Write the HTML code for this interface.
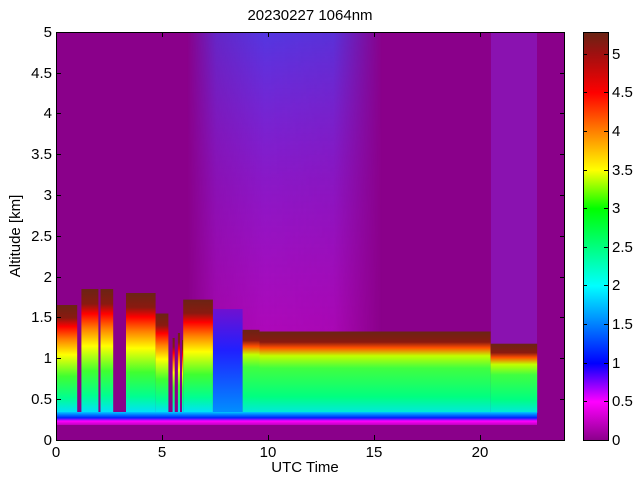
<!DOCTYPE html>
<html><head><meta charset="utf-8"><style>
body{margin:0;background:#fff;width:640px;height:480px;overflow:hidden}
svg{position:absolute;left:0;top:0;font-family:"Liberation Sans",sans-serif}
</style></head><body>
<svg width="640" height="480" viewBox="0 0 640 480" xmlns="http://www.w3.org/2000/svg">
<defs>
<linearGradient id="cl" x1="0" y1="0" x2="0" y2="1">
<stop offset="0" stop-color="#6b2414"/><stop offset="0.12" stop-color="#8a1a10"/><stop offset="0.2" stop-color="#ff0000"/><stop offset="0.32" stop-color="#ff8000"/><stop offset="0.46" stop-color="#ffff00"/><stop offset="0.66" stop-color="#40ff30"/><stop offset="0.86" stop-color="#00ff90"/><stop offset="1" stop-color="#00e0ff"/></linearGradient>
<linearGradient id="lc" x1="0" y1="0" x2="0" y2="1">
<stop offset="0" stop-color="#6b2414"/><stop offset="0.13" stop-color="#8a1a10"/><stop offset="0.2" stop-color="#ff5000"/><stop offset="0.3" stop-color="#c0ff00"/><stop offset="0.45" stop-color="#40ff40"/><stop offset="0.8" stop-color="#00ff80"/><stop offset="1" stop-color="#00e8e0"/></linearGradient>
<linearGradient id="bl" x1="0" y1="0" x2="0" y2="1">
<stop offset="0" stop-color="#7010d0"/><stop offset="0.4" stop-color="#2020ff"/><stop offset="1" stop-color="#0090ff"/></linearGradient>
<linearGradient id="sf" x1="0" y1="0" x2="0" y2="1">
<stop offset="0" stop-color="#00c8ff"/><stop offset="0.45" stop-color="#0020ff"/><stop offset="0.7" stop-color="#ff00ff"/><stop offset="1" stop-color="#c000c0"/></linearGradient>
<linearGradient id="nz" x1="0" y1="0" x2="0" y2="1">
<stop offset="0" stop-color="#4a40f0" stop-opacity="0.85"/><stop offset="0.5" stop-color="#8a28f0" stop-opacity="0.6"/><stop offset="1" stop-color="#d010e8" stop-opacity="0.5"/></linearGradient>
<linearGradient id="nm" x1="0" y1="0" x2="1" y2="0">
<stop offset="0" stop-color="#fff" stop-opacity="0"/><stop offset="0.15" stop-color="#fff" stop-opacity="0.7"/><stop offset="0.4" stop-color="#fff" stop-opacity="1"/><stop offset="0.75" stop-color="#fff" stop-opacity="0.9"/><stop offset="1" stop-color="#fff" stop-opacity="0"/></linearGradient>
<mask id="m"><rect x="187" y="32" width="195" height="410" fill="url(#nm)"/></mask>
<linearGradient id="cb" x1="0" y1="0" x2="0" y2="1">
<stop offset="0" stop-color="#692414"/><stop offset="0.053" stop-color="#a01010"/><stop offset="0.148" stop-color="#ff0000"/><stop offset="0.242" stop-color="#ff8000"/><stop offset="0.337" stop-color="#ffff00"/><stop offset="0.432" stop-color="#00ff00"/><stop offset="0.527" stop-color="#00ff80"/><stop offset="0.621" stop-color="#00ffff"/><stop offset="0.716" stop-color="#0080ff"/><stop offset="0.811" stop-color="#0000ff"/><stop offset="0.905" stop-color="#ff00ff"/><stop offset="1" stop-color="#8a008a"/></linearGradient>
</defs>
<rect x="56" y="32" width="509" height="408" fill="#8a008a"/>
<rect x="187" y="32" width="195" height="300" fill="url(#nz)" mask="url(#m)"/>
<rect x="491" y="32" width="46" height="312" fill="#8a20d0" opacity="0.55"/>
<rect x="212.9" y="309" width="29.7" height="104" fill="url(#bl)"/>
<g fill="url(#cl)">
<rect x="56" y="305" width="21.2" height="108"/>
<rect x="81.4" y="289" width="17" height="124"/>
<rect x="100.5" y="289" width="12.7" height="124"/>
<rect x="126" y="293" width="29.6" height="120"/>
<rect x="155.6" y="313.5" width="12.8" height="99.5"/>
<rect x="172.6" y="338" width="2.1" height="75"/>
<rect x="177.9" y="333" width="2.1" height="80"/>
<rect x="182" y="340" width="1.2" height="73"/>
<rect x="183.2" y="299.6" width="29.7" height="113.4"/>
</g>
<g fill="url(#lc)">
<rect x="242.6" y="329.8" width="16.9" height="83.2"/>
<rect x="259.5" y="331.5" width="231.1" height="81.5"/>
<rect x="490.6" y="343.7" width="46.6" height="69.3"/>
</g>
<rect x="56" y="412" width="481" height="13" fill="url(#sf)"/>
<rect x="583.5" y="32.5" width="25" height="408" fill="url(#cb)" stroke="#000"/>
<rect x="56.5" y="32.5" width="508" height="408" fill="none" stroke="#000"/>
<g stroke="#000">
<path d="M56 440.5h5M56 399.5h5M56 358.5h5M56 317.5h5M56 277.5h5M56 236.5h5M56 195.5h5M56 154.5h5M56 113.5h5M56 73.5h5M56 32.5h5"/>
<path d="M565 399.5h-5M565 358.5h-5M565 317.5h-5M565 277.5h-5M565 236.5h-5M565 195.5h-5M565 154.5h-5M565 113.5h-5M565 73.5h-5"/>
<path d="M162.5 440v-5M268.5 440v-5M374.5 440v-5M480.5 440v-5M162.5 32v5M268.5 32v5M374.5 32v5M480.5 32v5"/>
<path d="M583 401.5h4M583 363.5h4M583 324.5h4M583 285.5h4M583 247.5h4M583 208.5h4M583 170.5h4M583 131.5h4M583 92.5h4M583 54.5h4"/>
<path d="M608 401.5h-4M608 363.5h-4M608 324.5h-4M608 285.5h-4M608 247.5h-4M608 208.5h-4M608 170.5h-4M608 131.5h-4M608 92.5h-4M608 54.5h-4"/>
</g>
<g font-size="15" fill="#000" text-anchor="end">
<text x="52" y="445">0</text><text x="52" y="404">0.5</text><text x="52" y="363">1</text><text x="52" y="322">1.5</text><text x="52" y="282">2</text><text x="52" y="241">2.5</text><text x="52" y="200">3</text><text x="52" y="159">3.5</text><text x="52" y="118">4</text><text x="52" y="78">4.5</text><text x="52" y="37">5</text>
</g>
<g font-size="15" fill="#000" text-anchor="middle">
<text x="56" y="457">0</text><text x="162" y="457">5</text><text x="268" y="457">10</text><text x="374" y="457">15</text><text x="480" y="457">20</text>
<text x="305" y="472">UTC Time</text>
<text x="310" y="20">20230227 1064nm</text>
<text transform="translate(20 236) rotate(-90)">Altitude [km]</text>
</g>
<g font-size="15" fill="#000">
<text x="612" y="445">0</text><text x="612" y="406">0.5</text><text x="612" y="368">1</text><text x="612" y="329">1.5</text><text x="612" y="290">2</text><text x="612" y="252">2.5</text><text x="612" y="213">3</text><text x="612" y="175">3.5</text><text x="612" y="136">4</text><text x="612" y="97">4.5</text><text x="612" y="59">5</text>
</g>
</svg>
</body></html>
